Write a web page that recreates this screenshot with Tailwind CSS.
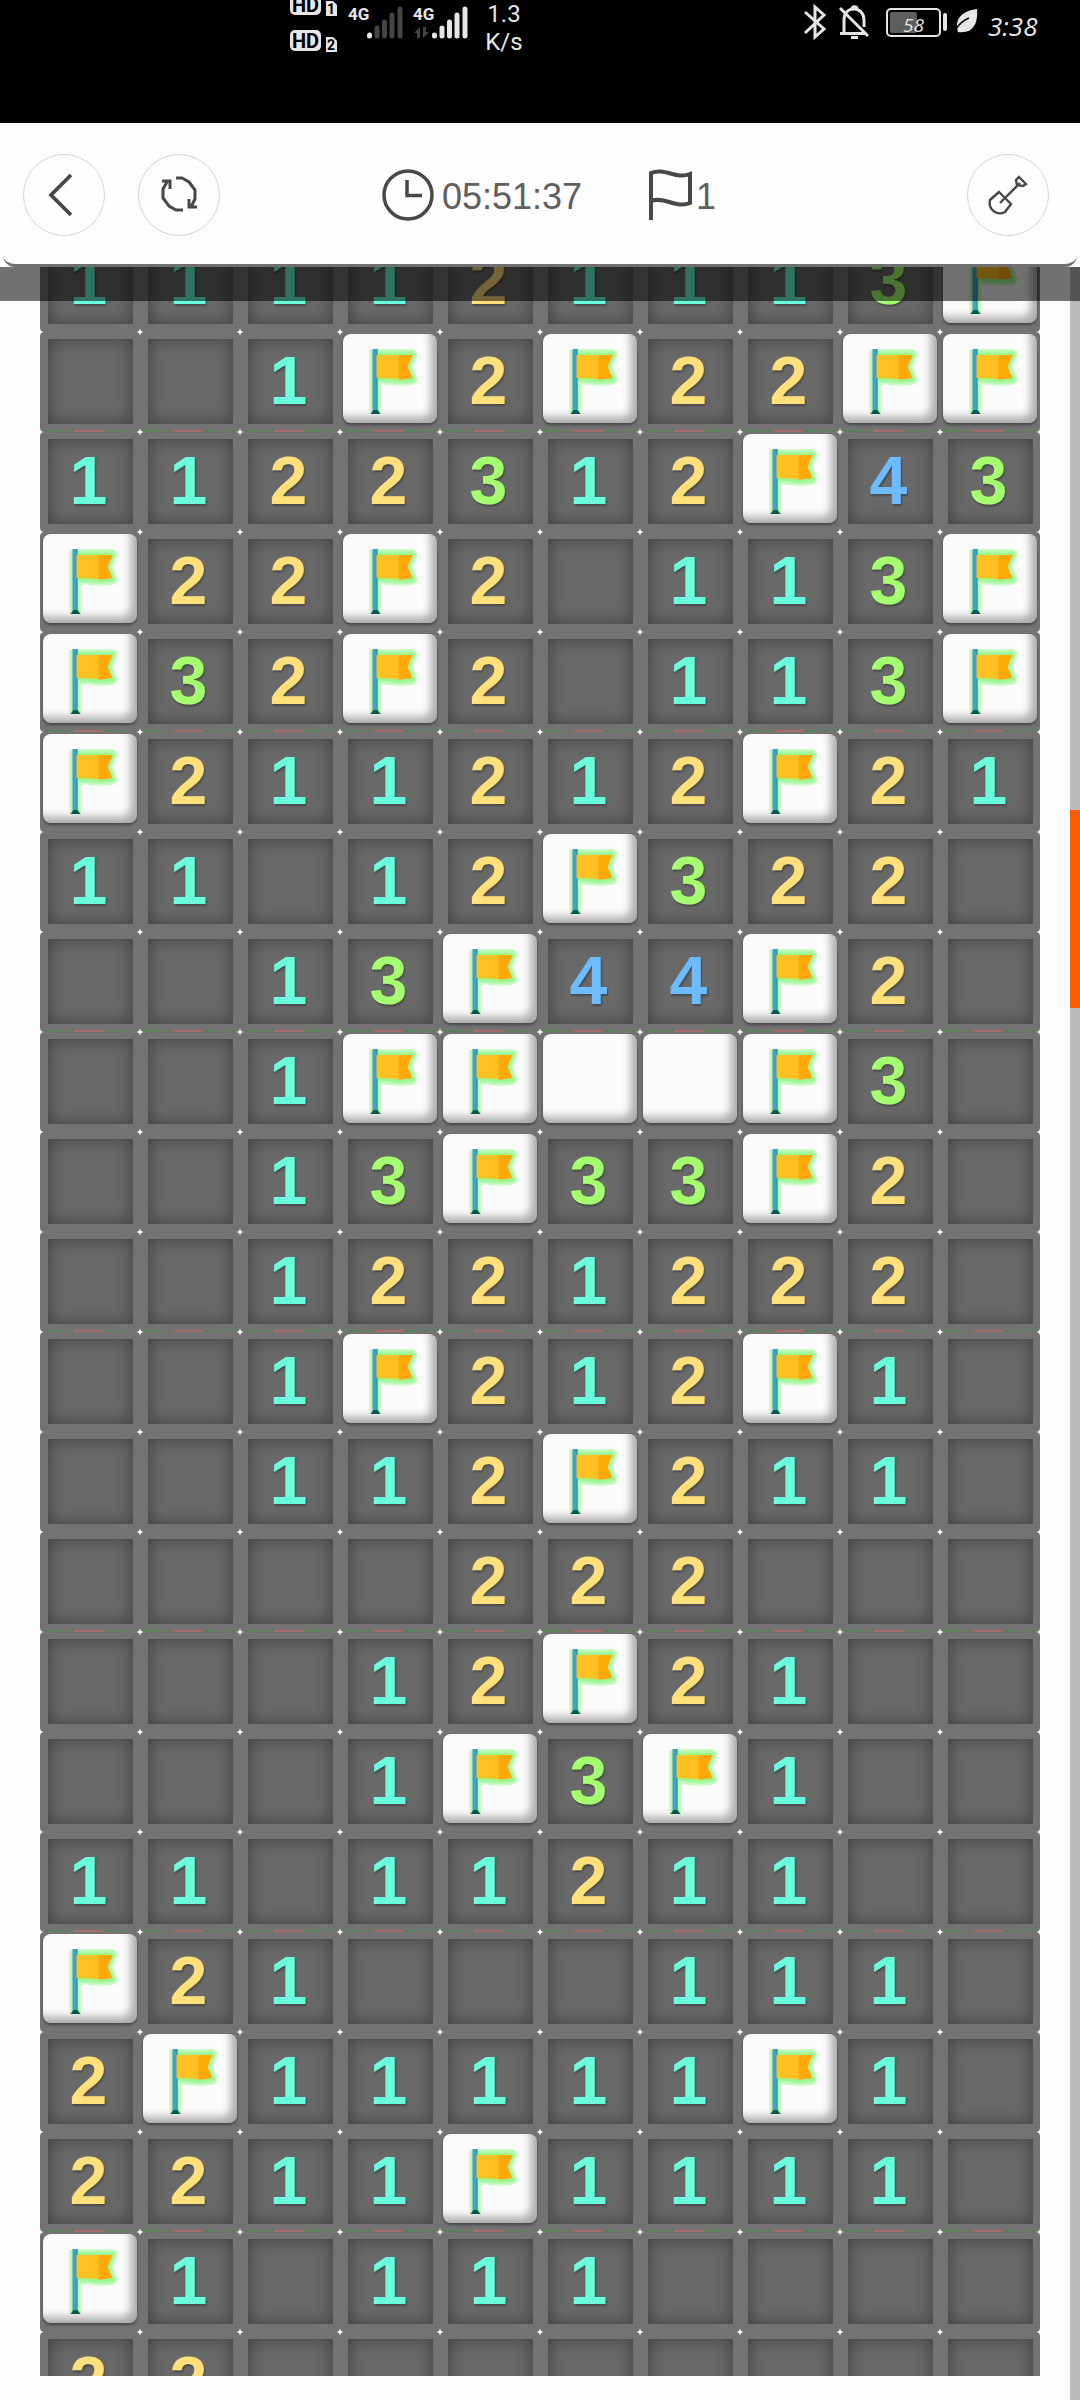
<!DOCTYPE html>
<html lang="en">
<head>
<meta charset="utf-8">
<meta name="viewport" content="width=device-width, initial-scale=1">
<title>Minesweeper</title>
<script src="https://cdn.jsdelivr.net/npm/@tailwindcss/browser@4"></script>
</head>
<body class="flex h-screen flex-col overflow-hidden bg-[#fdfdfd] font-['Liberation_Sans',sans-serif]">

<!-- status bar -->
<div class="flex h-[123px] shrink-0 items-start justify-between bg-black pr-10 pl-[290px] text-[#e6e6e6]">
  <div class="flex items-start">
    <svg class="h-[54px] w-[50px]" viewBox="0 0 50 54" fill="#e6e6e6" font-family="Roboto, sans-serif" font-weight="700">
      <rect x="0" y="-6" width="31" height="21" rx="5"/>
      <text x="2" y="12" font-size="20" fill="#000">HD</text>
      <path d="M36 1h7l4 4v11H36z"/>
      <text x="37" y="14" font-size="14" fill="#000">1</text>
      <rect x="0" y="30" width="31" height="21" rx="5"/>
      <text x="2" y="48" font-size="20" fill="#000">HD</text>
      <path d="M36 37h7l4 4v11H36z"/>
      <text x="37" y="50" font-size="14" fill="#000">2</text>
    </svg>
    <svg class="h-[54px] w-[134px]" viewBox="0 0 134 54" font-family="Roboto, sans-serif" font-weight="700" fill="#e6e6e6">
      <text x="8" y="20" font-size="17">4G</text>
      <g stroke-width="5" stroke-linecap="round" stroke="#444">
        <path d="M29.500 35v1" stroke="#e6e6e6"/>
        <path d="M37 28v8M44.500 22v14M52 15v21M60 9v27"/>
        <path d="M94.500 35v1M102 28v8M109.500 22v14M117 15v21M125 9v27" stroke="#e6e6e6"/>
      </g>
      <text x="73" y="20" font-size="17">4G</text>
      <path d="M74 33l6-6v11h-3v-5zM83 27v11l6-6h-3v-5z" fill="#444"/>
    </svg>
    <div class="w-[60px] text-center font-[Roboto,sans-serif] text-[24px] leading-[28px]">1.3<br>K/s</div>
  </div>
  <div class="flex items-start">
    <svg class="h-[44px] w-[182px]" viewBox="0 0 182 44" fill="none" stroke="#e6e6e6" stroke-width="3">
      <path d="M3 12l19 17-9 8V7l9 8L3 33"/>
      <path d="M42 33V20c0-8 5-11 10-11s10 4 10 11v7M38 33.500h26M50 9c0-3 5-3 5 0M38 8l28 28"/>
      <path d="M49 37.500h7"/>
      <rect x="85" y="9" width="53" height="27" rx="4" stroke-width="2"/>
      <rect x="88" y="12" width="27" height="21" rx="2" fill="#5e5e5e" stroke="none"/>
      <text x="101" y="32" font-size="19" font-family="Open Sans, sans-serif" font-style="italic" fill="#e6e6e6" stroke="none">58</text>
      <path d="M143 15v14" stroke-width="4" stroke-linecap="round"/>
      <path d="M175 9c1 12-2 25-19 23-4-12 3-21 19-23z" fill="#e6e6e6" stroke="none"/>
      <path d="M154 29c4-6 8-9 13-11" stroke="#000" stroke-width="1.500"/>
    </svg>
    <time class="mt-3 w-14 pl-1 font-['Open_Sans',sans-serif] text-[26px] leading-7 italic">3:38</time>
  </div>
</div>

<!-- toolbar -->
<header class="relative z-20 mx-[3px] grid h-[144px] shrink-0 grid-cols-[1fr_auto_1fr] items-center rounded-b-xl border-b-3 border-[#707070] bg-[#fdfdfd] pt-[3px] pr-[28px] pl-5 text-[#484848]">
  <div class="flex gap-[33px]">
    <button aria-label="Back" class="flex size-[82px] items-center justify-center rounded-full border border-[#d4d4d4]">
      <svg class="size-12" viewBox="0 0 48 48" fill="none" stroke="currentColor" stroke-width="3.800"><path d="M31 4L11 24l20 20"/></svg>
    </button>
    <button aria-label="Restart" class="flex size-[82px] items-center justify-center rounded-full border border-[#d4d4d4]">
      <svg class="size-10" viewBox="0 0 40 40" fill="none" stroke="currentColor" stroke-width="3"><path d="M17 3h6l7 4 6 8v9l-4 8M30 24v8h8M24 35h-7l-7-4-6-8v-9l4-7M3 6h8v8"/></svg>
    </button>
  </div>
  <div class="ml-[26px] flex items-center">
    <svg class="size-[52px]" viewBox="0 0 52 52" fill="none" stroke="currentColor" stroke-width="3.500"><circle cx="26" cy="26" r="24"/><path d="M25 11v15.500h15"/></svg>
    <time class="ml-2 pt-[3px] text-[36px] leading-10 text-[#606060]">05:51:37</time>
    <svg class="ml-[66px] h-[52px] w-[44px]" viewBox="0 0 44 52" fill="none" stroke="currentColor" stroke-width="4"><path d="M3 51V4c14-6 25 7 39 1v29c-14 6-25-7-39-2"/></svg>
    <span class="ml-1 pt-[3px] text-[36px] leading-10 text-[#606060]">1</span>
  </div>
  <button aria-label="Dig" class="flex size-[82px] items-center justify-center justify-self-end rounded-full border border-[#d4d4d4]">
    <svg class="size-10" viewBox="0 0 40 40" fill="none" stroke="currentColor" stroke-width="2.400"><path d="M11 17l12 12-6 8c-8 4-17-2-15-12zM12 28L32 8M31 2l7 7-3 2-6-1-1-5z"/></svg>
  </button>
</header>

<!-- scrolled minefield -->
<main class="relative min-h-0 flex-1 overflow-hidden pb-6">
  <div class="h-full overflow-hidden px-10">
    <div id="board" class="relative -mt-[35px] grid grid-cols-10 overflow-hidden bg-[#737373]">
      <svg class="pointer-events-none absolute inset-0 size-full" viewBox="0 0 1000 2200">
        <defs>
          <pattern id="spark" width="100" height="100" patternUnits="userSpaceOnUse" x="-50" y="-50">
            <path d="M50 46.500l1 2.500 2.500 1-2.500 1-1 2.500-1-2.500-2.500-1 2.500-1z" fill="#fff"/>
          </pattern>
          <pattern id="seam" width="100" height="300" patternUnits="userSpaceOnUse" y="-100">
            <path d="M4 299h92" stroke="#5b815b" stroke-width="2" stroke-dasharray="18 3 5 3"/>
            <path d="M34 299h29" stroke="#a56c6c" stroke-width="2"/>
          </pattern>
        </defs>
        <rect width="1000" height="2200" fill="url(#seam)"/>
        <rect width="1000" height="2200" fill="url(#spark)"/>
        <symbol id="flag" viewBox="0 0 93 89">
          <g stroke="#74f56a" stroke-opacity=".34" stroke-linejoin="round" fill="none">
            <path d="M31.500 16v64M34 21h34l-5 12 5 12-11 1-23-2z" stroke-width="12"/>
            <path d="M31.500 16v64M34 21h34l-5 12 5 12-11 1-23-2z" stroke-width="8"/>
            <path d="M31.500 16v64M34 21h34l-5 12 5 12-11 1-23-2z" stroke-width="4"/>
          </g>
          <path d="M31.500 15v65" stroke="#459fc4" stroke-width="5"/>
          <path d="M33.500 15v65" stroke="#2a9a88" stroke-width="1"/>
          <path d="M27 80l3-4h4l3 4z" fill="#07584c"/>
          <path d="M33 21h23v24l-23-1z" fill="#ffc121"/>
          <path d="M55 21h14l-5 12 5 11-14 2z" fill="#ffa90d"/>
        </symbol>
      </svg>
    </div>
  </div>
  <!-- shadow cast by the toolbar -->
  <div class="pointer-events-none absolute inset-x-0 top-0 z-10 h-[34px] bg-black/55"></div>
  <!-- scroll track -->
  <div class="absolute inset-y-0 right-0 w-[10px] bg-[#bababa]">
    <div class="mt-[543px] h-[198px] bg-[#ff5c00]"></div>
  </div>
</main>

<script>
const rows = [
  "111121113F", "..1F2F22FF", "1122312F43", "F22F2.113F", "F32F2.113F", "F211212F21",
  "11.12F322.", "..13F44F2.", "..1FFWWF3.", "..13F33F2.", "..1221222.", "..1F212F1.",
  "..112F211.", "....222...", "...12F21..", "...1F3F1..", "11.11211..", "F21...111.",
  "2F11111F1.", "2211F1111.", "F1.111....", "22........"
];
const colors = { 1: "text-[#69ffdc]", 2: "text-[#ffe17c]", 3: "text-[#a6ff6e]", 4: "text-[#6cbcff]" };
const open = "flex size-full items-center justify-center bg-[#696969] pr-1 pb-[3px] text-[68px] leading-none font-bold shadow-[inset_0_0_18px_rgba(0,0,0,0.4)] text-shadow-[1px_2px_2px_rgba(0,0,0,0.3)]";
const raised = "block size-full rounded-lg bg-[#fbfbfb] shadow-[inset_-7px_-7px_9px_-1px_rgba(0,0,0,0.32),0_2px_3px_rgba(0,0,0,0.4)]";
const board = document.getElementById("board");
for (const row of rows) for (const c of row) {
  const cell = document.createElement("div");
  const up = c === "F" || c === "W";
  cell.className = up ? "relative aspect-square px-[3px] pt-[2px] pb-[9px]" : "relative aspect-square pt-[7px] pr-[7px] pb-2 pl-2";
  const b = document.createElement("button");
  b.className = up ? raised : open + " " + (colors[c] || "");
  b.setAttribute("aria-label", c === "F" ? "Flag" : c === "W" ? "Covered" : c === "." ? "Empty" : c);
  if (c === "F") b.innerHTML = '<svg class="size-full" viewBox="0 0 93 89"><use href="#flag"/></svg>';
  else if (colors[c]) b.textContent = c;
  cell.append(b);
  board.append(cell);
}
</script>
</body>
</html>
